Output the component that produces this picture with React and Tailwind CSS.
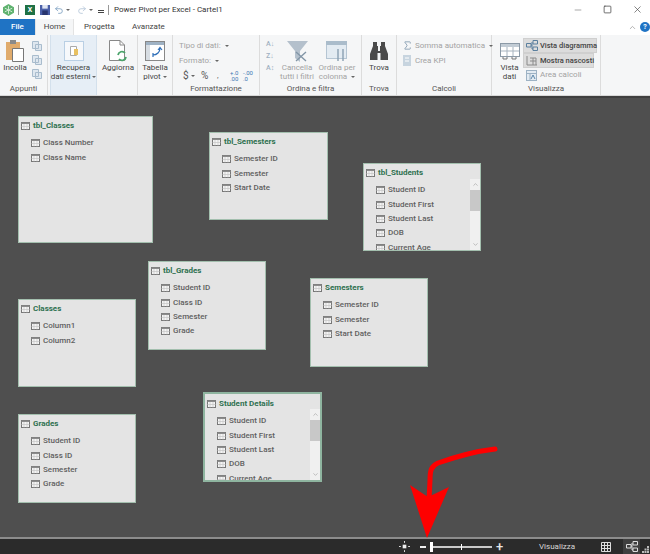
import { X, Minus, Square, ChevronUp, ChevronDown, Undo2, Redo2, Sigma } from 'lucide-react'

const FONT = 'font-["Roboto","Noto_Sans",sans-serif]'

// --- little table glyph used in cards ---
function TableIcon() {
  return (
    <svg width="9" height="8" viewBox="0 0 9 8" className="shrink-0">
      <rect x="0.5" y="0.5" width="8" height="7" fill="#f4f4f4" stroke="#777" />
      <rect x="0.5" y="0.5" width="8" height="1.5" fill="#8c8c8c" />
      <path d="M3 2V7.5M6 2V7.5M0.5 4.5H8.5" stroke="#c4c4c4" strokeWidth="0.7" fill="none" />
    </svg>
  )
}

function Caret() {
  return <span className="inline-block w-0 h-0 border-x-[2px] border-x-transparent border-t-[2px] border-t-[#666] align-middle ml-[2px]"></span>
}

// --- diagram cards ---
function Card({ title, columns, scroll, selected, className }) {
  return (
    <div className={`absolute bg-[#e4e4e4] overflow-hidden ${selected ? 'border-[2px] border-[#8fb5a0]' : 'border border-[#a3bfae]'} ${className}`}>
      <div className={`flex items-center gap-[3px] pl-[2px] ${selected ? 'h-[19px]' : 'h-[19px] -mt-[1px]'}`}>
        <TableIcon />
        <span className="text-[8px] font-bold text-[#2f7150] leading-none whitespace-nowrap">{title}</span>
      </div>
      <div className="flex flex-col pl-[12px] pt-[1px]">
        {columns.map(c => (
          <div key={c} className="flex items-center gap-[3px] h-[14.4px] shrink-0">
            <TableIcon />
            <span className="text-[8px] font-medium text-[#5f5f5f] leading-none whitespace-nowrap">{c}</span>
          </div>
        ))}
      </div>
      {scroll && (
        <div className="absolute right-0 top-[15px] bottom-0 w-[10px] bg-[#f0f0f0] flex flex-col items-center">
          <ChevronUp size={7} className="text-[#9a9a9a] mt-[2px]" />
          <div className="w-full h-[21px] bg-[#c8c8c8] mt-[2px]"></div>
          <ChevronDown size={7} className="text-[#9a9a9a] mt-auto mb-[2px]" />
        </div>
      )}
    </div>
  )
}

// --- ribbon ---
function Group({ label, width, children }) {
  return (
    <div style={{ width }} className="flex flex-col h-full shrink-0 border-r border-[#dcdcdc]">
      <div className="flex-1 flex min-h-0">{children}</div>
      <div className="h-[13px] text-[8px] leading-[14px] text-center text-[#555]">{label}</div>
    </div>
  )
}

function BigButton({ icon, lines, caret, className = '' }) {
  return (
    <div className={`flex flex-col items-center pt-[5px] text-[8px] leading-[9px] text-[#444] text-center ${className}`}>
      <div className="h-[22px] flex items-center justify-center">{icon}</div>
      <div className="mt-[1px]">
        {lines.map((l, i) => <div key={l} className="whitespace-nowrap">{l}{caret && lines.length > 1 && i === lines.length - 1 && <Caret />}</div>)}
        {caret && lines.length === 1 && <div><Caret /></div>}
      </div>
    </div>
  )
}

function Ribbon() {
  return (
    <div className="flex h-[61px] bg-[#f5f6f7] border-b border-[#d8d8d8] shrink-0 text-[#555]">
      <Group label="Appunti" width={48}>
        <div className="flex flex-col items-center pt-[5px] w-[30px] text-[8px] text-[#444]">
          <svg width="18" height="22" viewBox="0 0 18 22">
            <rect x="0" y="2" width="14" height="18" fill="#e0ab6c" />
            <rect x="4" y="0" width="6" height="4" fill="#8a8a8a" />
            <path d="M6.5 8.5H17.5V21.5H6.5Z" fill="#fff" stroke="#777" />
          </svg>
          <span className="mt-[1px] leading-[9px]">Incolla</span>
        </div>
        <div className="flex flex-col gap-[4px] pt-[6px] pl-[2px]">
          {[0, 1, 2].map(i => (
            <svg key={i} width="10" height="10" viewBox="0 0 10 10">
              <path d="M0.5 0.5H6.5V7.5H0.5ZM3.5 3.5H9.5V9.5H3.5Z" fill="#dfe7ef" stroke="#a9bccd" />
            </svg>
          ))}
        </div>
      </Group>
      <div className="w-[90px] flex h-full shrink-0 border-r border-[#dcdcdc] pl-[2px]">
        <BigButton className="w-[47px] h-full bg-[#e6eef6] border-x border-[#d3e0ec]" lines={['Recupera', 'dati esterni']} caret icon={
          <svg width="20" height="20" viewBox="0 0 20 20">
            <rect x="0.5" y="0.5" width="19" height="19" fill="#f6f8fb" stroke="#b9cfe4" />
            <path d="M6.5 5.5H12.5V14.5H6.5Z" fill="#fff" stroke="#aaa" />
            <rect x="10" y="8" width="4" height="6" fill="#e8c060" />
          </svg>
        } />
        <BigButton className="w-[36px] ml-[3px]" lines={['Aggiorna']} caret icon={
          <svg width="18" height="22" viewBox="0 0 18 22">
            <path d="M0.5 0.5H11L15.5 5V20.5H0.5Z" fill="#fff" stroke="#888" />
            <path d="M11 0.5V5H15.5" fill="none" stroke="#888" />
            <path d="M9 15A4 4 0 0 1 16 13M17 17A4 4 0 0 1 10 19" fill="none" stroke="#4aa36a" strokeWidth="1.8" />
          </svg>
        } />
      </div>
      <div className="w-[35px] flex justify-center h-full shrink-0 border-r border-[#dcdcdc]">
        <BigButton lines={['Tabella', 'pivot']} caret icon={
          <svg width="20" height="20" viewBox="0 0 20 20">
            <rect x="0.5" y="0.5" width="19" height="19" fill="#fff" stroke="#888" />
            <rect x="1" y="1" width="18" height="3" fill="#9fb2c4" />
            <rect x="1" y="4" width="4" height="15" fill="#d7dde3" />
            <path d="M8 14C12 14 15 11 15 7M13 9L15 6.5L17 9M8 12V16" stroke="#2f6fb8" strokeWidth="1.2" fill="none" />
          </svg>
        } />
      </div>
      <Group label="Formattazione" width={87}>
        <div className="pl-[6px] pt-[3px] text-[8px] text-[#a3a3a3] leading-[15px]">
          <div>Tipo di dati: <Caret /></div>
          <div>Formato: <Caret /></div>
          <div className="flex items-center text-[#555] text-[10px] pl-[4px] h-[15px]">
            <span className="w-[18px]">$<Caret /></span>
            <span className="w-[16px]">%</span>
            <span className="w-[13px] text-[8px]">,</span>
            <span className="w-[13px] text-[6px] text-[#3d78b5] leading-[6px]">+.0<br />.00</span>
            <span className="text-[6px] text-[#3d78b5] leading-[6px]">-.00<br />.0</span>
          </div>
        </div>
      </Group>
      <Group label="Ordina e filtra" width={102}>
        <div className="flex flex-col gap-[3px] pl-[6px] pt-[5px] text-[7px] leading-[9px] text-[#9fb1c2] font-medium w-[18px]">
          <span>A↓</span><span>Z↓</span><span>A↕</span>
        </div>
        <div className="flex flex-col items-center w-[38px] pt-[6px] text-[8px] leading-[9px] text-[#a3a3a3] shrink-0">
          <svg width="21" height="21" viewBox="0 0 21 21">
            <path d="M0 0H21L13 10V21L8 17V10Z" fill="#b4c0cc" />
            <path d="M9 11L19 20M19 11L9 20" stroke="#8295a6" strokeWidth="1.4" />
          </svg>
          <div className="mt-[1px] whitespace-nowrap text-center">Cancella<br />tutti i filtri</div>
        </div>
        <div className="flex flex-col items-center w-[42px] pt-[6px] text-[8px] leading-[9px] text-[#a3a3a3] shrink-0">
          <svg width="22" height="21" viewBox="0 0 22 21">
            <rect x="0.5" y="0.5" width="20" height="17" fill="#e3ebf2" stroke="#b5c5d3" />
            <rect x="0" y="0" width="21" height="4" fill="#aabccb" />
            <path d="M12 8V20M17 20V8" stroke="#8aa0b3" strokeWidth="1.4" />
          </svg>
          <div className="mt-[1px] whitespace-nowrap text-center">Ordina per<br />colonna <Caret /></div>
        </div>
      </Group>
      <Group label="Trova" width={35}>
        <BigButton className="w-full" lines={['Trova']} icon={
          <svg width="18" height="18" viewBox="0 0 18 18">
            <path d="M3 0H7V4H8V9H10V4H11V0H15V4L18 12V18H10.5V11H7.5V18H0V12L3 4Z" fill="#4a4a4a" />
          </svg>
        } />
      </Group>
      <Group label="Calcoli" width={95}>
        <div className="pl-[5px] pt-[3px] text-[8px] text-[#a3a3a3] leading-[15px]">
          <div className="flex items-center gap-[2px] whitespace-nowrap"><Sigma size={11} className="text-[#8aa0b3]" />Somma automatica <Caret /></div>
          <div className="flex items-center gap-[3px]">
            <svg width="10" height="11" viewBox="0 0 10 11"><rect x="1" y="0" width="8" height="11" fill="#c7d4df" /><path d="M3 3H7M3 6H7" stroke="#fff" /></svg>
            Crea KPI
          </div>
        </div>
      </Group>
      <Group label="Visualizza" width={109}>
        <div className="w-[31px] flex justify-center pl-[4px]">
          <BigButton lines={['Vista', 'dati']} icon={
            <svg width="20" height="17" viewBox="0 0 20 17">
              <rect x="0.5" y="0.5" width="19" height="13" fill="#fff" stroke="#8c9aa7" />
              <rect x="1" y="1" width="18" height="3" fill="#c2ccd5" />
              <path d="M7 4V13M13 4V13M1 8H19" stroke="#a8b4bf" />
              <path d="M3 14V16H7V14M12 14V16H16V14" stroke="#777" fill="none" />
            </svg>
          } />
        </div>
        <div className="flex flex-col pt-[3px] text-[7.5px] leading-[14px] font-medium">
          <div className="flex items-center gap-[2px] h-[15px] w-[74px] bg-[#dcdcdc] border border-[#cfcfcf] text-[#444] pl-[2px] whitespace-nowrap">
            <svg width="12" height="11" viewBox="0 0 12 11" className="shrink-0"><path d="M0.5 3.5H5V7H0.5ZM7 0.5H11.5V4H7ZM7 7H11.5V10.5H7ZM5 5H6M6 2V9H7" fill="none" stroke="#5a7f9e" /></svg>
            Vista diagramma
          </div>
          <div className="flex items-center gap-[2px] h-[15px] w-[71px] bg-[#dcdcdc] border border-[#cfcfcf] text-[#444] pl-[2px] whitespace-nowrap">
            <svg width="12" height="11" viewBox="0 0 12 11" className="shrink-0"><path d="M1 1V10H11M4 3H10V10M4 6H10M7 3V10" fill="none" stroke="#8a8a8a" /></svg>
            Mostra nascosti
          </div>
          <div className="flex items-center gap-[3px] h-[15px] pl-[3px] text-[8px] text-[#a3a3a3] font-normal whitespace-nowrap">
            <svg width="11" height="11" viewBox="0 0 11 11" className="shrink-0"><rect x="0.5" y="0.5" width="10" height="10" fill="#e3ebf2" stroke="#9db2c4" /><path d="M0.5 3.5H10.5M4 3.5V10.5" stroke="#9db2c4" fill="none" /><path d="M5 9L7 5L9 9" stroke="#5d87aa" fill="none" /></svg>
            Area calcoli
          </div>
        </div>
      </Group>
    </div>
  )
}

function StatusBar() {
  return (
    <div className="h-[17px] shrink-0 bg-[#2b2b2b] border-t-[2px] border-[#8c8c8c] flex items-center text-[#e6e6e6]">
      <svg width="11" height="11" viewBox="0 0 12 12" className="ml-[399px] shrink-0">
        <rect x="4" y="4" width="4" height="4" fill="#eee" />
        <path d="M6 0V2M6 10V12M0 6H2M10 6H12" stroke="#eee" />
      </svg>
      <span className="w-[6px] h-[2px] bg-[#eee] ml-[10px] shrink-0"></span>
      <div className="relative w-[62px] h-[2px] bg-[#c9c9c9] ml-[4px] shrink-0">
        <span className="absolute left-0 -top-[4px] w-[3px] h-[10px] bg-white"></span>
        <span className="absolute left-[31px] -top-[2px] w-[1px] h-[6px] bg-white"></span>
      </div>
      <span className="text-[13px] leading-none font-medium ml-[4px] w-[8px]">+</span>
      <span className="text-[8px] ml-[35px] text-[#d8d8d8] w-[34px] whitespace-nowrap">Visualizza</span>
      <svg width="10" height="10" viewBox="0 0 10 10" className="ml-[28px] shrink-0">
        <path d="M0.5 0.5H9.5V9.5H0.5ZM3.5 0.5V9.5M6.5 0.5V9.5M0.5 3.5H9.5M0.5 6.5H9.5" fill="none" stroke="#ddd" />
      </svg>
      <div className="w-[17px] h-[15px] bg-[#3f3f3f] ml-[12px] shrink-0 flex items-center justify-center">
        <svg width="12" height="11" viewBox="0 0 12 11"><path d="M0.5 3.5H5V7H0.5ZM7 0.5H11.5V4H7ZM7 7H11.5V10.5H7ZM5 5H6M6 2V9H7" fill="none" stroke="#ddd" /></svg>
      </div>
      <svg width="7" height="7" viewBox="0 0 7 7" className="ml-[2px] mt-[6px] shrink-0">
        <path d="M5 0H7V2H5ZM2.5 2.5H4.5V4.5H2.5ZM5 2.5H7V4.5H5ZM0 5H2V7H0ZM2.5 5H4.5V7H2.5ZM5 5H7V7H5Z" fill="#bbb" />
      </svg>
    </div>
  )
}

export default function App() {
  return (
    <div className={`w-[650px] h-[554px] flex flex-col overflow-hidden relative bg-white ${FONT}`}>
      {/* TITLE BAR */}
      <div className="h-[19px] shrink-0 flex items-center pl-[3px] text-[8px] text-[#333]">
        <svg width="11" height="12" viewBox="0 0 12 13" className="shrink-0"><path d="M6 0L12 3.5V9.5L6 13L0 9.5V3.5Z" fill="#5fb26f" /><path d="M6 2V11M2 4.5L10 8.5M10 4.5L2 8.5" stroke="#d6eeda" /></svg>
        <span className="w-px h-[10px] bg-[#999] ml-[4px]"></span>
        <span className="ml-[6px] w-[10px] h-[10px] bg-[#1f7145] text-white text-[7px] font-bold leading-[10px] text-center">X</span>
        <svg width="10" height="10" viewBox="0 0 11 11" className="ml-[5px] shrink-0"><rect width="11" height="11" fill="#4a5fa8" /><rect x="2.5" y="0" width="6" height="4" fill="#dfe5f3" /><rect x="2.5" y="6" width="6" height="5" fill="#28356e" /></svg>
        <Undo2 size={10} className="ml-[4px] text-[#7c9fc0]" /><Caret />
        <Redo2 size={10} className="ml-[7px] text-[#b4c6d8]" /><Caret />
        <span className="ml-[5px] w-[6px] h-[6px] border-b-[3px] border-double border-[#444]"></span>
        <span className="w-px h-[10px] bg-[#999] ml-[4px]"></span>
        <span className="ml-[5px] whitespace-nowrap">Power Pivot per Excel - Cartel1</span>
        <div className="ml-auto flex items-center text-[#444]">
          <Minus size={10} className="text-[#999]" />
          <Square size={9} className="ml-[20px]" />
          <X size={11} strokeWidth={1.4} className="ml-[20px] mr-[7px]" />
        </div>
      </div>

      {/* TABS */}
      <div className="h-[16px] shrink-0 flex items-stretch text-[8px] text-[#444]">
        <div className="w-[35px] bg-[#1f73c4] text-white font-medium flex items-center justify-center">File</div>
        <div className="w-[39px] bg-[#f5f6f7] border-x border-[#e3e3e3] flex items-center justify-center">Home</div>
        <div className="ml-[10px] w-[28px] flex items-center whitespace-nowrap">Progetta</div>
        <div className="ml-[20px] flex items-center">Avanzate</div>
        <div className="ml-auto flex items-center">
          <ChevronUp size={9} className="text-[#999] mr-[3px]" />
          <span className="w-[10px] h-[10px] rounded-full bg-[#1f73c4] text-white text-[7px] font-bold leading-[10px] text-center">?</span>
        </div>
      </div>

      <Ribbon />

      {/* DIAGRAM */}
      <div className="flex-1 relative bg-[#4f4f4f]">
        <div className="h-[2px] bg-[#3f3f3f]"></div>
        <Card title="tbl_Classes" columns={['Class Number', 'Class Name']} className="left-[18px] top-[20px] w-[135px] h-[127px]" />
        <Card title="tbl_Semesters" columns={['Semester ID', 'Semester', 'Start Date']} className="left-[209px] top-[36px] w-[119px] h-[88px]" />
        <Card title="tbl_Students" columns={['Student ID', 'Student First', 'Student Last', 'DOB', 'Current Age']} scroll className="left-[363px] top-[67px] w-[118px] h-[88px]" />
        <Card title="tbl_Grades" columns={['Student ID', 'Class ID', 'Semester', 'Grade']} className="left-[148px] top-[165px] w-[118px] h-[89px]" />
        <Card title="Semesters" columns={['Semester ID', 'Semester', 'Start Date']} className="left-[310px] top-[182px] w-[118px] h-[89px]" />
        <Card title="Classes" columns={['Column1', 'Column2']} className="left-[18px] top-[203px] w-[118px] h-[88px]" />
        <Card title="Grades" columns={['Student ID', 'Class ID', 'Semester', 'Grade']} className="left-[18px] top-[318px] w-[118px] h-[89px]" />
        <Card title="Student Details" columns={['Student ID', 'Student First', 'Student Last', 'DOB', 'Current Age']} scroll selected className="left-[203px] top-[296px] w-[119px] h-[90px]" />
      </div>

      <StatusBar />

      {/* RED ARROW */}
      <svg width="650" height="554" viewBox="0 0 650 554" className="absolute left-0 top-0 pointer-events-none">
        <path d="M495 449C478 451 455 457 438 463C431 466 430 471 430 480L429 500" fill="none" stroke="#fe0000" strokeWidth="5" strokeLinecap="round" />
        <path d="M410 485L428 497L449 487L427 538Z" fill="#fe0000" />
      </svg>
    </div>
  )
}
